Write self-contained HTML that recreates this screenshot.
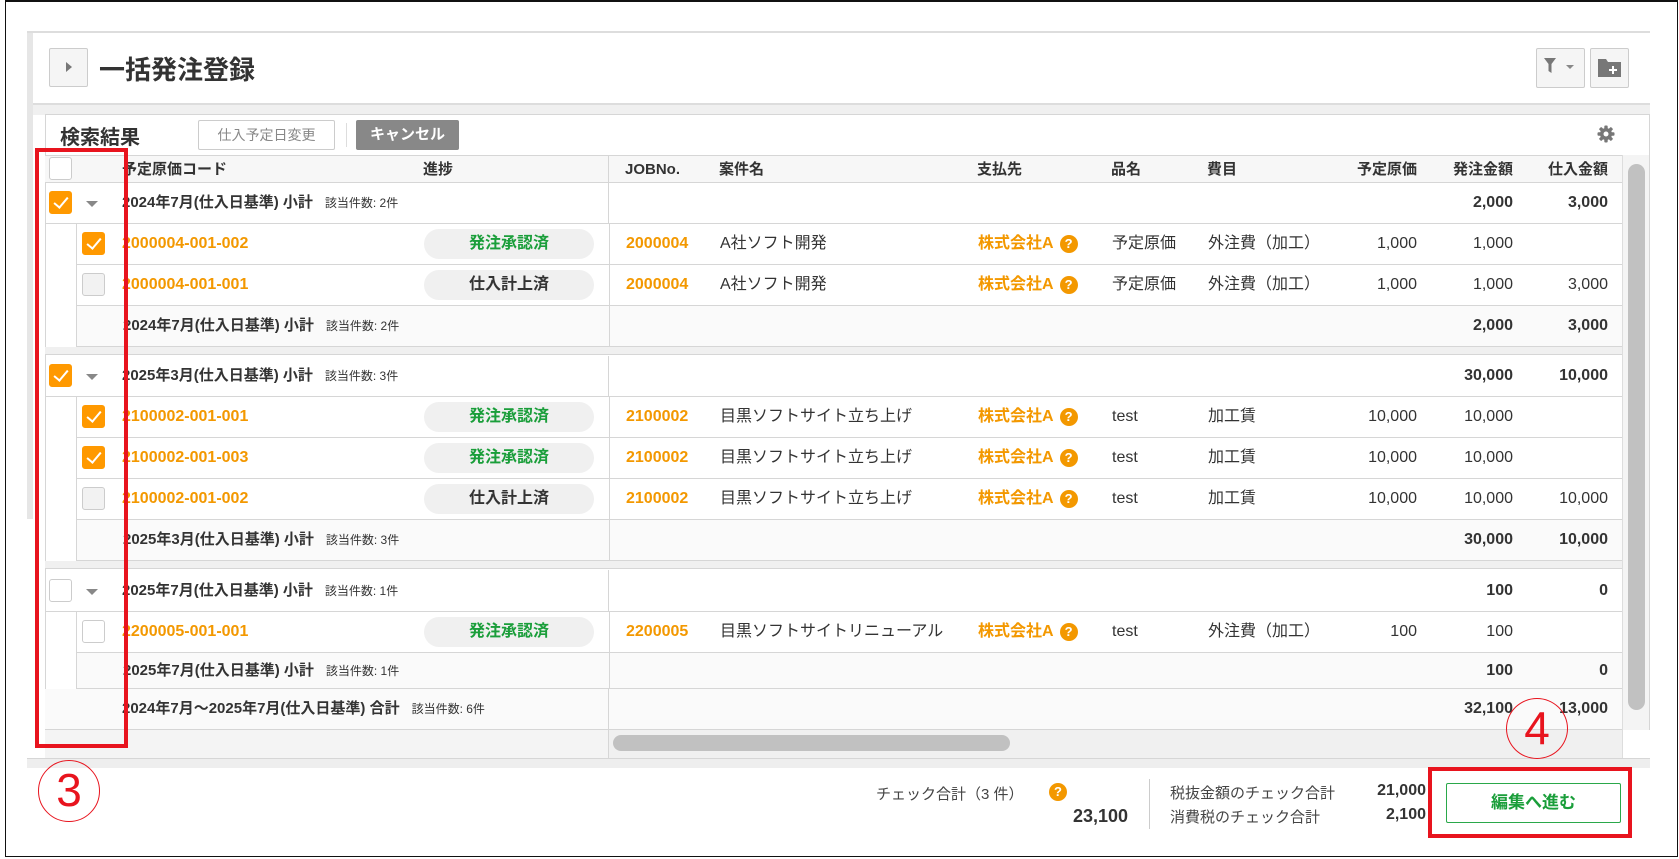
<!DOCTYPE html>
<html><head><meta charset="utf-8">
<style>
*{box-sizing:border-box;margin:0;padding:0}
body{width:1679px;height:859px;background:#fff;position:relative;overflow:hidden;font-family:"Liberation Sans","Noto Sans CJK JP",sans-serif;color:#333}
.a{position:absolute}
.row{position:absolute;left:45px;width:1577px;border-bottom:1px solid #d6d6d6;line-height:40px}
.t{position:absolute;white-space:nowrap;font-size:16px;top:0!important;line-height:inherit}
.b{font-weight:bold}
.or{color:#f39800;font-weight:bold}
.r{text-align:right}
.cb{position:absolute;width:23px;height:23px;border:1px solid #ccc;border-radius:3px;background:#fff}
.cb.on{background:#f90;border-color:#f90}
.cb.dis{background:#f2f2f2}
.cb.on:after{content:"";position:absolute;left:7px;top:2px;width:6px;height:12px;border:solid #fff;border-width:0 2.5px 2.5px 0;transform:rotate(40deg)}
.arr{position:absolute;width:0;height:0;border-left:6px solid transparent;border-right:6px solid transparent;border-top:6px solid #888}
.pill{position:absolute;left:378px;width:170px;height:30px;border-radius:15px;background:#f0f0f0;text-align:center;line-height:30px;font-size:16px;font-weight:bold}
.q{display:inline-block;width:18px;height:18px;border-radius:50%;background:#f39800;color:#fff;font-size:13px;line-height:18px;text-align:center;font-weight:bold;vertical-align:middle;margin-left:6px}
.small{font-size:12px;font-weight:normal;margin-left:12px}
.vd{position:absolute;left:563px;top:0;bottom:0;border-left:1px solid #d6d6d6}
</style></head><body>
<div class="a" style="left:5px;top:0;width:1673px;height:857px;border:1.5px solid #111;border-top-width:2px"></div>
<div class="a" style="left:27px;top:31px;width:1623px;border-top:2px solid #ddd"></div>
<div class="a" style="left:27px;top:33px;width:6px;height:486px;background:#e6e6e6"></div>
<!-- title -->
<div class="a" style="left:49px;top:48px;width:39px;height:39px;border:1px solid #ccc;border-radius:2px;background:#f5f5f5"></div>
<div class="a" style="left:66px;top:62px;width:0;height:0;border-top:5px solid transparent;border-bottom:5px solid transparent;border-left:6px solid #777"></div>
<div class="a b" style="left:99px;top:50px;font-size:26px;color:#333">一括発注登録</div>
<div class="a" style="left:1536px;top:48px;width:49px;height:40px;border:1px solid #ccc;border-radius:2px;background:#f5f5f5"></div>
<svg class="a" style="left:1544px;top:58px" width="34" height="20"><path d="M0 0H12L7.5 6V15L4.5 13V6Z" fill="#777"/><path d="M22 7H30L26 11Z" fill="#888"/></svg>
<div class="a" style="left:1590px;top:48px;width:39px;height:40px;border:1px solid #ccc;border-radius:2px;background:#f5f5f5"></div>
<svg class="a" style="left:1597px;top:58px" width="26" height="20"><path d="M1 1H9L11 4H24V19H1Z" fill="#777"/><path d="M16 8V16M12 12H20" stroke="#fff" stroke-width="2"/></svg>
<!-- band -->
<div class="a" style="left:33px;top:103px;width:1617px;height:12px;background:#f0f0f0;border-top:2px solid #ddd"></div>
<div class="a" style="left:45px;top:114px;width:1605px;height:645px;border:1px solid #d6d6d6;border-bottom:none"></div>
<div class="a b" style="left:60px;top:121px;font-size:20px;color:#333">検索結果</div>
<div class="a" style="left:198px;top:120px;width:137px;height:30px;border:1px solid #ccc;border-radius:2px;font-size:14px;color:#888;text-align:center;line-height:28px">仕入予定日変更</div>
<div class="a" style="left:346px;top:123px;height:24px;border-left:1px solid #ddd"></div>
<div class="a b" style="left:356px;top:120px;width:103px;height:30px;border-radius:2px;background:#888;color:#fff;font-size:15px;text-align:center;line-height:30px">キャンセル</div>
<svg class="a" style="left:1597px;top:125px" width="18" height="18" viewBox="0 0 18 18"><g fill="#777"><circle cx="9" cy="9" r="6"/><rect x="7.3" y="0.5" width="3.4" height="17" rx="1"/><rect x="7.3" y="0.5" width="3.4" height="17" rx="1" transform="rotate(45 9 9)"/><rect x="7.3" y="0.5" width="3.4" height="17" rx="1" transform="rotate(90 9 9)"/><rect x="7.3" y="0.5" width="3.4" height="17" rx="1" transform="rotate(135 9 9)"/></g><circle cx="9" cy="9" r="2.5" fill="#fff"/></svg>

<!-- vertical scrollbar -->
<div class="a" style="left:1622px;top:155px;width:27px;height:575px;background:#f4f4f4;border-left:1px solid #ddd"></div>
<div class="a" style="left:1628px;top:164px;width:17px;height:546px;border-radius:9px;background:#c1c1c1"></div>

<!-- header -->
<div class="row" style="top:155px;height:28px;line-height:27px;background:#f7f7f7;border-top:1px solid #d6d6d6"><div class="vd"></div>
<div class="cb" style="left:4px;top:1px"></div>
<div class="t b" style="left:77px;font-size:15px">予定原価コード</div>
<div class="t b" style="left:378px;font-size:15px">進捗</div>
<div class="t b" style="left:580px;font-size:15px">JOBNo.</div>
<div class="t b" style="left:674px;font-size:15px">案件名</div>
<div class="t b" style="left:932px;font-size:15px">支払先</div>
<div class="t b" style="left:1066px;font-size:15px">品名</div>
<div class="t b" style="left:1162px;font-size:15px">費目</div>
<div class="t b r" style="right:205px;font-size:15px">予定原価</div>
<div class="t b r" style="right:109px;font-size:15px">発注金額</div>
<div class="t b r" style="right:14px;font-size:15px">仕入金額</div>
</div>

<!-- group1 -->
<div class="row" style="top:183px;height:41px"><div class="vd"></div>
<div class="cb on" style="left:4px;top:8px"></div><div class="arr" style="left:41px;top:18px"></div>
<div class="t b" style="left:77px;font-size:15px">2024年7月(仕入日基準) 小計<span class="small">該当件数: 2件</span></div>
<div class="t b r" style="right:109px">2,000</div><div class="t b r" style="right:14px">3,000</div></div>

<div class="row" style="top:224px;height:41px;left:76px;width:1546px;border-left:1px solid #d6d6d6"><div class="vd" style="left:532px"></div>
<div class="cb on" style="left:5px;top:8px"></div>
<div class="t or" style="left:45px">2000004-001-002</div>
<div class="pill" style="left:347px;top:5px;color:#1a9e3a">発注承認済</div>
<div class="t or" style="left:549px">2000004</div>
<div class="t" style="left:643px">A社ソフト開発</div>
<div class="t or" style="left:901px">株式会社A<span class="q">?</span></div>
<div class="t" style="left:1035px">予定原価</div>
<div class="t" style="left:1131px">外注費（加工）</div>
<div class="t r" style="right:205px">1,000</div><div class="t r" style="right:109px">1,000</div></div>

<div class="row" style="top:265px;height:41px;left:76px;width:1546px;border-left:1px solid #d6d6d6"><div class="vd" style="left:532px"></div>
<div class="cb dis" style="left:5px;top:8px"></div>
<div class="t or" style="left:45px">2000004-001-001</div>
<div class="pill" style="left:347px;top:5px;color:#333">仕入計上済</div>
<div class="t or" style="left:549px">2000004</div>
<div class="t" style="left:643px">A社ソフト開発</div>
<div class="t or" style="left:901px">株式会社A<span class="q">?</span></div>
<div class="t" style="left:1035px">予定原価</div>
<div class="t" style="left:1131px">外注費（加工）</div>
<div class="t r" style="right:205px">1,000</div><div class="t r" style="right:109px">1,000</div><div class="t r" style="right:14px">3,000</div></div>

<div class="row" style="top:306px;height:41px;left:76px;width:1546px;border-left:1px solid #d6d6d6;background:#fafafa"><div class="vd" style="left:532px"></div>
<div class="t b" style="left:46px;font-size:15px">2024年7月(仕入日基準) 小計<span class="small">該当件数: 2件</span></div>
<div class="t b r" style="right:109px">2,000</div><div class="t b r" style="right:14px">3,000</div></div>
<div class="a" style="left:45px;top:347px;width:1577px;height:8px;background:#f0f0f0;border-bottom:1px solid #d6d6d6"></div>

<!-- group2 -->
<div class="row" style="top:356px;height:41px"><div class="vd"></div>
<div class="cb on" style="left:4px;top:8px"></div><div class="arr" style="left:41px;top:18px"></div>
<div class="t b" style="left:77px;font-size:15px">2025年3月(仕入日基準) 小計<span class="small">該当件数: 3件</span></div>
<div class="t b r" style="right:109px">30,000</div><div class="t b r" style="right:14px">10,000</div></div>

<div class="row" style="top:397px;height:41px;left:76px;width:1546px;border-left:1px solid #d6d6d6"><div class="vd" style="left:532px"></div>
<div class="cb on" style="left:5px;top:8px"></div>
<div class="t or" style="left:45px">2100002-001-001</div>
<div class="pill" style="left:347px;top:5px;color:#1a9e3a">発注承認済</div>
<div class="t or" style="left:549px">2100002</div>
<div class="t" style="left:643px">目黒ソフトサイト立ち上げ</div>
<div class="t or" style="left:901px">株式会社A<span class="q">?</span></div>
<div class="t" style="left:1035px">test</div>
<div class="t" style="left:1131px">加工賃</div>
<div class="t r" style="right:205px">10,000</div><div class="t r" style="right:109px">10,000</div></div>

<div class="row" style="top:438px;height:41px;left:76px;width:1546px;border-left:1px solid #d6d6d6"><div class="vd" style="left:532px"></div>
<div class="cb on" style="left:5px;top:8px"></div>
<div class="t or" style="left:45px">2100002-001-003</div>
<div class="pill" style="left:347px;top:5px;color:#1a9e3a">発注承認済</div>
<div class="t or" style="left:549px">2100002</div>
<div class="t" style="left:643px">目黒ソフトサイト立ち上げ</div>
<div class="t or" style="left:901px">株式会社A<span class="q">?</span></div>
<div class="t" style="left:1035px">test</div>
<div class="t" style="left:1131px">加工賃</div>
<div class="t r" style="right:205px">10,000</div><div class="t r" style="right:109px">10,000</div></div>

<div class="row" style="top:479px;height:41px;left:76px;width:1546px;border-left:1px solid #d6d6d6"><div class="vd" style="left:532px"></div>
<div class="cb dis" style="left:5px;top:8px"></div>
<div class="t or" style="left:45px">2100002-001-002</div>
<div class="pill" style="left:347px;top:5px;color:#333">仕入計上済</div>
<div class="t or" style="left:549px">2100002</div>
<div class="t" style="left:643px">目黒ソフトサイト立ち上げ</div>
<div class="t or" style="left:901px">株式会社A<span class="q">?</span></div>
<div class="t" style="left:1035px">test</div>
<div class="t" style="left:1131px">加工賃</div>
<div class="t r" style="right:205px">10,000</div><div class="t r" style="right:109px">10,000</div><div class="t r" style="right:14px">10,000</div></div>

<div class="row" style="top:520px;height:41px;left:76px;width:1546px;border-left:1px solid #d6d6d6;background:#fafafa"><div class="vd" style="left:532px"></div>
<div class="t b" style="left:46px;font-size:15px">2025年3月(仕入日基準) 小計<span class="small">該当件数: 3件</span></div>
<div class="t b r" style="right:109px">30,000</div><div class="t b r" style="right:14px">10,000</div></div>
<div class="a" style="left:45px;top:561px;width:1577px;height:8px;background:#f0f0f0;border-bottom:1px solid #d6d6d6"></div>

<!-- group3 -->
<div class="row" style="top:570px;height:42px;line-height:41px"><div class="vd"></div>
<div class="cb" style="left:4px;top:9px"></div><div class="arr" style="left:41px;top:19px"></div>
<div class="t b" style="left:77px;font-size:15px">2025年7月(仕入日基準) 小計<span class="small">該当件数: 1件</span></div>
<div class="t b r" style="right:109px">100</div><div class="t b r" style="right:14px">0</div></div>

<div class="row" style="top:612px;height:41px;left:76px;width:1546px;border-left:1px solid #d6d6d6"><div class="vd" style="left:532px"></div>
<div class="cb" style="left:5px;top:8px"></div>
<div class="t or" style="left:45px">2200005-001-001</div>
<div class="pill" style="left:347px;top:5px;color:#1a9e3a">発注承認済</div>
<div class="t or" style="left:549px">2200005</div>
<div class="t" style="left:643px">目黒ソフトサイトリニューアル</div>
<div class="t or" style="left:901px">株式会社A<span class="q">?</span></div>
<div class="t" style="left:1035px">test</div>
<div class="t" style="left:1131px">外注費（加工）</div>
<div class="t r" style="right:205px">100</div><div class="t r" style="right:109px">100</div></div>

<div class="row" style="top:653px;height:36px;line-height:35px;left:76px;width:1546px;border-left:1px solid #d6d6d6;background:#fafafa"><div class="vd" style="left:532px"></div>
<div class="t b" style="left:46px;font-size:15px">2025年7月(仕入日基準) 小計<span class="small">該当件数: 1件</span></div>
<div class="t b r" style="right:109px">100</div><div class="t b r" style="right:14px">0</div></div>

<div class="row" style="top:689px;height:41px;background:#fafafa"><div class="vd"></div>
<div class="t b" style="left:77px;font-size:15px">2024年7月～2025年7月(仕入日基準) 合計<span class="small">該当件数: 6件</span></div>
<div class="t b r" style="right:109px">32,100</div><div class="t b r" style="right:14px">13,000</div></div>

<!-- horizontal scroll -->
<div class="a" style="left:45px;top:730px;width:564px;height:28px;background:#f4f4f4"></div>
<div class="a" style="left:608px;top:730px;width:1014px;height:28px;background:#f0f0f0;border-left:1px solid #d6d6d6"></div>
<div class="a" style="left:613px;top:735px;width:397px;height:16px;border-radius:8px;background:#c1c1c1"></div>
<div class="a" style="left:1622px;top:730px;width:28px;height:28px;background:#fff;border-left:1px solid #ddd"></div>
<div class="a" style="left:27px;top:758px;width:1623px;height:10px;background:#eee;border-top:1px solid #d6d6d6"></div>

<!-- footer -->
<div class="a" style="left:876px;top:783px;font-size:15px;color:#444">チェック合計（3 件）</div>
<div class="a" style="left:1049px;top:783px;width:18px;height:18px;border-radius:50%;background:#f39800;color:#fff;font-size:13px;font-weight:bold;text-align:center;line-height:18px">?</div>
<div class="a b" style="left:1000px;width:128px;top:806px;font-size:18px;text-align:right">23,100</div>
<div class="a" style="left:1149px;top:779px;height:50px;border-left:1px solid #ccc"></div>
<div class="a" style="left:1170px;top:782px;font-size:15px;color:#444">税抜金額のチェック合計</div>
<div class="a" style="left:1170px;top:806px;font-size:15px;color:#444">消費税のチェック合計</div>
<div class="a b" style="left:1340px;width:86px;top:782px;font-size:16px;text-align:right">21,000</div>
<div class="a b" style="left:1340px;width:86px;top:806px;font-size:16px;text-align:right">2,100</div>
<div class="a b" style="left:1446px;top:783px;width:175px;height:40px;border:1px solid #2aa84a;border-radius:2px;color:#1a9e3a;font-size:17px;text-align:center;line-height:38px">編集へ進む</div>

<!-- annotations -->
<div class="a" style="left:35px;top:148px;width:93px;height:600px;border:4px solid #e8141e"></div>
<div class="a" style="left:1428px;top:767px;width:204px;height:71px;border:4px solid #e8141e"></div>
<div class="a" style="left:38px;top:760px;width:62px;height:62px;border:1.5px solid #e8141e;border-radius:50%;color:#e8141e;font-size:46px;text-align:center;line-height:58px">3</div>
<div class="a" style="left:1506px;top:698px;width:62px;height:61px;border:1.5px solid #e8141e;border-radius:50%;color:#e8141e;font-size:46px;text-align:center;line-height:58px">4</div>
</body></html>
